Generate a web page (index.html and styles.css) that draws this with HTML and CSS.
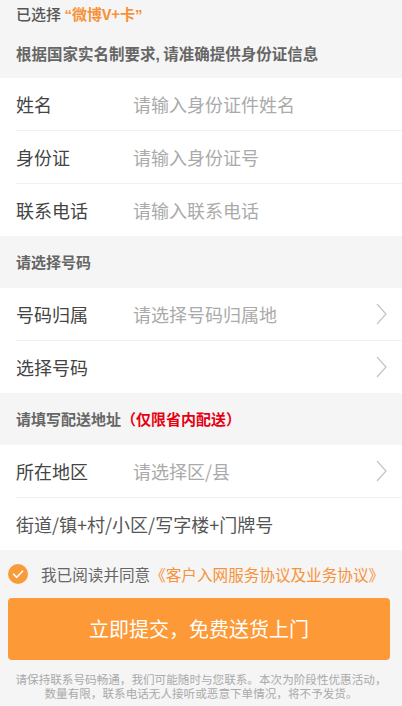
FILE: index.html
```html
<!DOCTYPE html>
<html lang="zh-CN">
<head>
<meta charset="utf-8">
<meta name="viewport" content="width=device-width, initial-scale=1">
<title>填写信息</title>
<link rel="stylesheet" href="styles.css">
</head>
<body>
<div class="page">
  <div class="head">
    <div class="head-line">已选择 <span class="hl"><span class="q">“</span>微博V+卡<span class="q">”</span></span></div>
    <div class="head-title">根据国家实名制要求<span class="q">,</span> 请准确提供身份证信息</div>
  </div>

  <div class="group">
    <div class="row"><span class="label">姓名</span><span class="ph">请输入身份证件姓名</span></div>
    <div class="row"><span class="label">身份证</span><span class="ph">请输入身份证号</span></div>
    <div class="row"><span class="label">联系电话</span><span class="ph">请输入联系电话</span></div>
  </div>

  <div class="section">请选择号码</div>

  <div class="group">
    <div class="row"><span class="label">号码归属</span><span class="ph">请选择号码归属地</span>
      <svg class="chev" width="12" height="22" viewBox="0 0 12 22"><polyline points="1,1 10,11 1,21" fill="none" stroke="#c4c4c4" stroke-width="1.2"/></svg></div>
    <div class="row"><span class="label">选择号码</span><span class="ph"></span>
      <svg class="chev" width="12" height="22" viewBox="0 0 12 22"><polyline points="1,1 10,11 1,21" fill="none" stroke="#c4c4c4" stroke-width="1.2"/></svg></div>
  </div>

  <div class="section">请填写配送地址<span class="red">（仅限省内配送）</span></div>

  <div class="group">
    <div class="row"><span class="label">所在地区</span><span class="ph">请选择区/县</span>
      <svg class="chev" width="12" height="22" viewBox="0 0 12 22"><polyline points="1,1 10,11 1,21" fill="none" stroke="#c4c4c4" stroke-width="1.2"/></svg></div>
    <div class="row"><span class="addr">街道/镇+村/小区/写字楼+门牌号</span></div>
  </div>

  <div class="agree">
    <svg class="check" width="20" height="20" viewBox="0 0 20 20"><circle cx="10" cy="10" r="10" fill="#f99a3b"/><polyline points="5.5,10.2 8.8,13.3 14.5,7.2" fill="none" stroke="#fff" stroke-width="1.6" stroke-linecap="round" stroke-linejoin="round"/></svg>
    <span class="agree-text">我已阅读并同意<span class="link">《客户入网服务协议及业务协议》</span></span>
  </div>

  <div class="btn-wrap"><div class="btn">立即提交，免费送货上门</div></div>

  <p class="note">请保持联系号码畅通，我们可能随时与您联系。本次为阶段性优惠活动，数量有限，联系电话无人接听或恶意下单情况，将不予发货。</p>
</div>
</body>
</html>
```

FILE: styles.css
```css
* { box-sizing: border-box; }
html, body { margin: 0; padding: 0; }
body {
  background: #f5f5f5;
  font-family: "Noto Sans CJK SC", "Noto Sans", sans-serif;
  color: #444;
}
.page { width: 402px; min-height: 706px; background: #f5f5f5; }

.head { height: 78px; padding-left: 16px; }
.head-line { height: 28px; line-height: 28px; font-size: 15px; color: #555; font-weight: 500; }
.hl { color: #f7923a; font-weight: 700; }
.q { font-family: "Liberation Sans", sans-serif; }
.head-title { height: 50px; line-height: 50px; font-size: 15.5px; font-weight: 700; color: #666; }

.group { background: #fff; padding-left: 16px; }
.row {
  height: 53px;
  display: flex;
  align-items: center;
  border-bottom: 1px solid #f0f0f0;
  padding-right: 14px;
}
.row:last-child { height: 52px; border-bottom: none; }
.label { width: 117px; flex: none; font-size: 18px; color: #444; }
.ph { flex: 1; font-size: 18px; color: #aaa; }
.addr { font-size: 18px; color: #555; }
.chev { flex: none; }

.section {
  height: 52px;
  line-height: 52px;
  padding-left: 16px;
  font-size: 15px;
  font-weight: 700;
  color: #666;
}
.red { color: #e60012; }

.agree {
  height: 48px;
  display: flex;
  align-items: center;
  padding-left: 8px;
}
.check { flex: none; margin-right: 13px; }
.agree-text { font-size: 15.6px; color: #666; }
.link { color: #f7923a; }

.btn-wrap { padding: 0 12px 0 8px; }
.btn {
  height: 62px;
  line-height: 62px;
  background: #fd9a37;
  border-radius: 4px;
  color: #fff;
  text-align: center;
  font-size: 20px;
}

.note {
  margin: 0;
  padding: 12px 12px 0;
  font-size: 11.6px;
  line-height: 14px;
  color: #aaa;
  text-align: center;
}
```
